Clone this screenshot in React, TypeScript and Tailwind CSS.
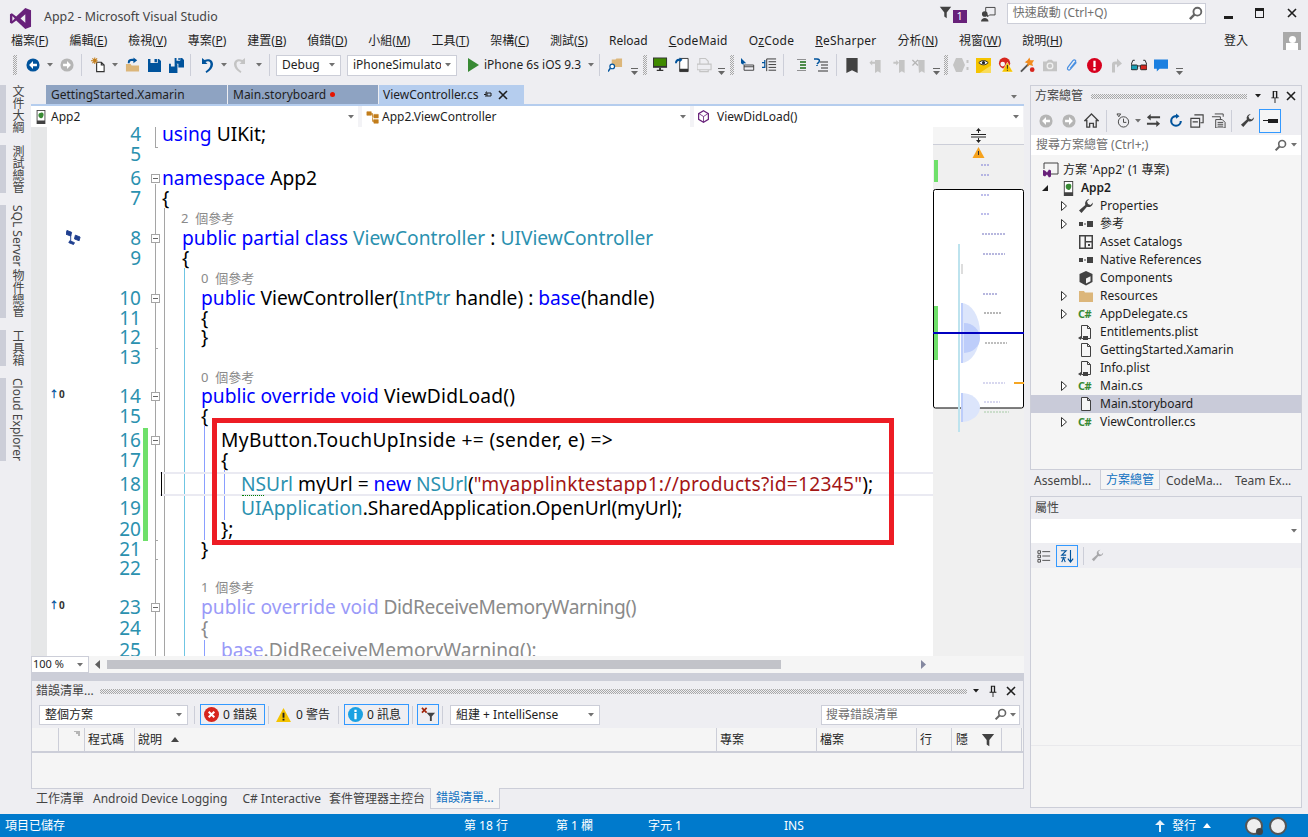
import React from 'react';

type IconProps = { className?: string; children?: React.ReactNode; vb?: string };

function Svg({ className = '', children, vb = '0 0 16 16' }: IconProps) {
  return (
    <svg viewBox={vb} className={`shrink-0 ${className}`}>
      {children}
    </svg>
  );
}

const Caret = ({ className = '' }: { className?: string }) => (
  <Svg vb="0 0 6 4" className={`h-[4px] w-[6px] ${className}`}>
    <path d="M0 0h6L3 3.500z" fill="#717171" />
  </Svg>
);

const checker = 'bg-[conic-gradient(#a8a8a8_25%,transparent_0_50%,#a8a8a8_0_75%,transparent_0)] bg-[length:2px_2px]';

const Grip = ({ className = '' }: { className?: string }) => (
  <div className={`h-[20px] w-[4px] ${checker} ${className}`} />
);

const HGrip = ({ className = '' }: { className?: string }) => (
  <div className={`h-[5px] flex-1 ${checker} ${className}`} />
);

const Sep = ({ className = '' }: { className?: string }) => (
  <div className={`h-[22px] w-px bg-[#ccced8] ${className}`} />
);

const SepSm = ({ className = '' }: { className?: string }) => (
  <div className={`h-[18px] w-px bg-[#ccced8] ${className}`} />
);

const Overflow = ({ className = '' }: { className?: string }) => (
  <Svg vb="0 0 7 7" className={`mt-[12px] h-[7px] w-[7px] ${className}`}>
    <path d="M0 0h7v1H0zM0 3h7L3.500 7z" fill="#666" />
  </Svg>
);

const Circle = ({ dir, color, className = '' }: { dir: 'l' | 'r'; color: string; className?: string }) => (
  <Svg className={`h-[14px] w-[14px] ${className}`}>
    <circle cx="8" cy="8" r="7.500" fill={color} />
    <path d={dir === 'l' ? 'M8 3.500L3.500 8 8 12.500V9.500h4.500v-3H8z' : 'M8 3.500L12.500 8 8 12.500V9.500H3.500v-3H8z'} fill="#fff" />
  </Svg>
);

const Floppy = ({ className = '' }: { className?: string }) => (
  <Svg className={`h-[13px] w-[13px] ${className}`}>
    <path fillRule="evenodd" d="M0 0h3v5h9V0h1.500L16 2.500V16H0zM8 0h3v4H8z" fill="#00539c" />
  </Svg>
);

const Csharp = () => (
  <span className="w-[16px] shrink-0 text-[11px] font-bold leading-[18px] tracking-[-0.5px] text-[#388a34]">C#</span>
);

const PageIcon = ({ lock }: { lock?: boolean }) => (
  <Svg className="h-[16px] w-[16px]">
    <path d="M3.500 1.500h6l3 3v10h-9z M9.500 1.500v3h3" fill={lock ? 'none' : '#f6f6f6'} stroke="#424242" />
    {lock && <path d="M0 14l3-2v4zM5 12h5v4H5z" fill="#424242" />}
  </Svg>
);

const RefIcon = () => (
  <Svg className="h-[16px] w-[16px]">
    <path d="M1 6h4v4H1zM6 7.500h2v1H6zM9 5h6v6H9z" fill="#424242" />
  </Svg>
);

const Arrow = () => (
  <Svg vb="0 0 8 12" className="h-[12px] w-[8px]">
    <path d="M1.500 1.500l5 4.500-5 4.500z" fill="#fff" stroke="#333" />
  </Svg>
);

const PhoneProject = ({ className = '' }: { className?: string }) => (
  <Svg className={className}>
    <path d="M3 0h10v16H3z" fill="#424242" />
    <path d="M4 1h8v11H4z" fill="#fff" />
    <path d="M8 3c2.500-.5 3 1 3 2.500S9.500 10 8 9.500 5 8 5 6s1-3 3-3z" fill="#388a34" />
  </Svg>
);

const Pin = ({ className = '' }: { className?: string }) => (
  <Svg vb="0 0 10 14" className={`w-[10px] ${className}`}>
    <path d="M2.500 1h5v7h1.500v1h-3.500v5h-1V9H1V8h1.500zM4 2v6h2V2z" fill="#1e1e1e" fillRule="evenodd" />
  </Svg>
);

const CloseX = ({ className = '' }: { className?: string }) => (
  <Svg vb="0 0 10 10" className={`h-[10px] w-[10px] ${className}`}>
    <path d="M1 1l8 8M9 1L1 9" stroke="#1e1e1e" strokeWidth="1.600" />
  </Svg>
);

const Magnifier = ({ className = '' }: { className?: string }) => (
  <Svg className={className}>
    <circle cx="10" cy="6" r="4.200" fill="none" stroke="#666" strokeWidth="2" />
    <path d="M7 9l-5 5" stroke="#666" strokeWidth="2.600" />
  </Svg>
);

const Wrench = ({ className = '' }: { className?: string }) => (
  <Svg className={className}>
    <path d="M15 4.500a4.500 4.500 0 0 1-6 4.200L3.500 15 1 12.500l6.300-5.500A4.500 4.500 0 0 1 11.500 1L9 3.500 10 6l2.500 1z" fill="#424242" />
  </Svg>
);

const FunnelIcon = ({ className = '' }: { className?: string }) => (
  <Svg className={className}>
    <path d="M1 1h14L9.500 8v7l-3-2V8z" fill="#424242" />
  </Svg>
);

const menus: [string, string, string, string?][] = [
  ['檔案(', 'F', ')'], ['編輯(', 'E', ')'], ['檢視(', 'V', ')'], ['專案(', 'P', ')'], ['建置(', 'B', ')'],
  ['偵錯(', 'D', ')'], ['小組(', 'M', ')'], ['工具(', 'T', ')'], ['架構(', 'C', ')'], ['測試(', 'S', ')'],
  ['', '', 'Reload'], ['', 'C', 'odeMaid', 'tracking-[0.25px]'], ['O', 'z', 'Code', 'tracking-[0.25px]'], ['', 'R', 'eSharper', 'tracking-[0.25px]'],
  ['分析(', 'N', ')'], ['視窗(', 'W', ')'], ['說明(', 'H', ')'],
];

const KW = 'text-[#0000ff]';
const TY = 'text-[#2b91af]';
const ST = 'text-[#a31515] tracking-[0.25px]';
const FK = 'text-[#9a9af8]';
const FG = 'text-[#8a8a8a]';

type Row = {
  n?: number;
  h: string;
  pad: string;
  lens?: string;
  fold?: boolean;
  code?: [string, string?][];
  glyph?: 'tree' | 'up';
};

const rows: Row[] = [
  { n: 4, h: 'h-[20px]', pad: 'pl-0', code: [['using', KW], [' UIKit;']] },
  { n: 5, h: 'h-[24px]', pad: 'pl-0' },
  { n: 6, h: 'h-[20px]', pad: 'pl-0', fold: true, code: [['namespace', KW], [' App2']] },
  { n: 7, h: 'h-[20px]', pad: 'pl-0', code: [['{']] },
  { h: 'h-[20px]', pad: 'pl-[19px]', lens: '2  個參考' },
  { n: 8, h: 'h-[20px]', pad: 'pl-[20px]', fold: true, glyph: 'tree', code: [['public partial class', KW], [' '], ['ViewController', TY], [' : '], ['UIViewController', TY]] },
  { n: 9, h: 'h-[20px]', pad: 'pl-[20px]', code: [['{']] },
  { h: 'h-[20px]', pad: 'pl-[39px]', lens: '0  個參考' },
  { n: 10, h: 'h-[20px]', pad: 'pl-[39px]', fold: true, code: [['public', KW], [' ViewController('], ['IntPtr', TY], [' handle) : '], ['base', KW], ['(handle)']] },
  { n: 11, h: 'h-[19px]', pad: 'pl-[39px]', code: [['{']] },
  { n: 12, h: 'h-[20px]', pad: 'pl-[39px]', code: [['}']] },
  { n: 13, h: 'h-[20px]', pad: 'pl-0' },
  { h: 'h-[19px]', pad: 'pl-[39px]', lens: '0  個參考' },
  { n: 14, h: 'h-[20px]', pad: 'pl-[39px]', fold: true, glyph: 'up', code: [['public override void', KW], [' ViewDidLoad()', 'tracking-[0.2px]']] },
  { n: 15, h: 'h-[24px]', pad: 'pl-[39px]', code: [['{']] },
  { n: 16, h: 'h-[20px]', pad: 'pl-[59px]', fold: true, code: [['MyButton.TouchUpInside += (sender, e) =>', 'tracking-[0.35px]']] },
  { n: 17, h: 'h-[24px]', pad: 'pl-[59px]', code: [['{']] },
  { n: 18, h: 'h-[24px]', pad: 'pl-[79px]', code: [['NSUrl', TY], [' myUrl = '], ['new', KW], [' '], ['NSUrl', TY], ['('], ['"myapplinktestapp1://products?id=12345"', ST], [');']] },
  { n: 19, h: 'h-[21px]', pad: 'pl-[79px]', code: [['UIApplication', TY], ['.SharedApplication.OpenUrl(myUrl);', 'tracking-[-0.05px]']] },
  { n: 20, h: 'h-[20px]', pad: 'pl-[59px]', code: [['};']] },
  { n: 21, h: 'h-[19px]', pad: 'pl-[39px]', code: [['}']] },
  { n: 22, h: 'h-[19px]', pad: 'pl-0' },
  { h: 'h-[20px]', pad: 'pl-[39px]', lens: '1  個參考' },
  { n: 23, h: 'h-[21px]', pad: 'pl-[39px]', fold: true, glyph: 'up', code: [['public override void', FK], [' DidReceiveMemoryWarning()', `${FG} tracking-[-0.4px]`]] },
  { n: 24, h: 'h-[22px]', pad: 'pl-[39px]', code: [['{', FG]] },
  { n: 25, h: 'h-[20px]', pad: 'pl-[59px]', code: [['base', FK], ['.DidReceiveMemoryWarning();', FG]] },
];

const treeRows: { label: string; icon: React.ReactNode; arrow?: boolean; sel?: boolean }[] = [
  { label: 'Properties', arrow: true, icon: <Wrench className="h-[16px] w-[16px]" /> },
  { label: '參考', arrow: true, icon: <RefIcon /> },
  {
    label: 'Asset Catalogs',
    icon: (
      <Svg className="h-[16px] w-[16px]">
        <path fillRule="evenodd" d="M1 1h14v14H1zM2.500 2.500v11h4v-11zM8 2.500V7h5.500V2.500zM8 8.500v5h5.500v-5zM10 10h2v2h-2z" fill="#424242" />
      </Svg>
    ),
  },
  { label: 'Native References', icon: <RefIcon /> },
  {
    label: 'Components',
    icon: (
      <Svg className="h-[16px] w-[16px]">
        <path d="M8 1l6.500 3v8L8 15.500 1.500 12V4z" fill="#424242" />
        <path d="M8 8.500l4.500-2.300v5L8 13.500z" fill="#f5f5f5" />
      </Svg>
    ),
  },
  {
    label: 'Resources',
    arrow: true,
    icon: (
      <Svg className="h-[16px] w-[16px]">
        <path d="M1 3h5l1 1.500h8V14H1z" fill="#dcb67a" />
      </Svg>
    ),
  },
  { label: 'AppDelegate.cs', arrow: true, icon: <Csharp /> },
  { label: 'Entitlements.plist', icon: <PageIcon lock /> },
  { label: 'GettingStarted.Xamarin', icon: <PageIcon /> },
  { label: 'Info.plist', icon: <PageIcon lock /> },
  { label: 'Main.cs', arrow: true, icon: <Csharp /> },
  { label: 'Main.storyboard', sel: true, icon: <PageIcon /> },
  { label: 'ViewController.cs', arrow: true, icon: <Csharp /> },
];

const miniText: [number, number, number, string][] = [
  [38, 48, 56, '#5555cc'], [48, 48, 56, '#5555cc'], [68, 48, 56, '#5555cc'], [87, 48, 56, '#5555cc'], [107, 49, 72, '#4444aa'],
  [127, 50, 72, '#4444aa'], [167, 50, 65, '#4444aa'], [186, 51, 69, '#444'], [206, 52, 80, '#662255'], [216, 52, 74, '#555'],
  [256, 50, 72, '#9a9ad8'], [275, 51, 67, '#9a9ad8'], [285, 51, 76, '#8fbf8f'],
];

function Minimap() {
  return (
    <Svg vb="0 0 91 530" className="h-[530px] w-[91px]">
      <rect width="91" height="530" fill="#f0f0f0" />
      <rect width="91" height="17" fill="#f5f5f5" />
      <rect y="17" width="91" height="1" fill="#ccced8" />
      <path d="M38 7h15v1H38zM38 9.500h15v1H38zM45.500 1l2.500 3h-2v2h-1V4h-2zM45.500 16L43 13h2v-2h1v2h2z" fill="#222" />
      <path d="M45.500 20l6 11h-12z" fill="#f6a21c" />
      <rect x="45" y="24" width="1" height="4" fill="#333" />
      <rect x="1" y="33" width="4" height="22" fill="#6fe06a" />
      <rect x="0.500" y="62.500" width="90" height="218.500" rx="2" fill="#fff" stroke="#000" />
      <rect x="1" y="179" width="4" height="54" fill="#6fe06a" />
      <rect x="25" y="117" width="2" height="188" fill="#bde3ee" />
      <rect x="28" y="137" width="2" height="10" fill="#ddd" />
      <path d="M28 176a19 30 0 0 1 0 60z" fill="#dce5fb" />
      <path d="M31 196a16 15 0 0 1 0 30z" fill="#bdcdfa" />
      <path d="M28 266a19 14.500 0 0 1 0 29z" fill="#dce5fb" />
      <rect x="28" y="176" width="2" height="60" fill="#bdcdfa" />
      <rect x="28" y="266" width="2" height="29" fill="#bdcdfa" />
      {miniText.map(([y, x1, x2, c]) => (
        <line key={y} x1={x1} x2={x2} y1={y} y2={y} stroke={c} strokeWidth="1.500" strokeDasharray="2 1" opacity="0.5" />
      ))}
      <rect y="205" width="91" height="2" fill="#0000c0" />
      <rect x="81" y="255" width="10" height="2" fill="#f5a623" />
    </Svg>
  );
}

function TitleBar() {
  return (
    <div className="flex h-[30px] shrink-0 items-center">
      <Svg vb="0 0 24 24" className="ml-[9px] mt-[6px] h-[23px] w-[23px]">
        <path fillRule="evenodd" d="M17 1l6 2.500v17L17 23l-9.500-9L3 17.500l-2-1v-9l2-1L7.500 10zM17 7.500L12 12l5 4.500zM3.500 9.500v5L6 12z" fill="#68217a" />
      </Svg>
      <span className="ml-[12px] mt-[5px] text-[12.4px] text-[#444]">App2 - Microsoft Visual Studio</span>
      <FunnelIcon className="ml-[721px] mt-[-6px] h-[15px] w-[13px]" />
      <span className="ml-px mt-[3px] flex h-[13px] w-[14px] items-center justify-center bg-[#68217a] text-[11px] text-white">1</span>
      <Svg className="ml-[14px] mt-[-3px] h-[16px] w-[15px]">
        <path d="M5 1h10v8H9l-2 2V9H5z" fill="none" stroke="#424242" />
        <circle cx="4" cy="8" r="3" fill="#424242" />
        <path d="M0 16c0-5 8-5 8 0z" fill="#424242" />
      </Svg>
      <div className="ml-[11px] mt-[-4px] flex h-[21px] w-[199px] items-center border border-[#ccced8] bg-white pl-[5px] pr-[2px] text-[12px] text-[#717171]">
        <span className="flex-1">快速啟動 (Ctrl+Q)</span>
        <Magnifier className="h-[15px] w-[15px]" />
      </div>
      <div className="ml-[18px] mt-[4px] h-[3px] w-[9px] bg-[#1e1e1e]" />
      <div className="ml-[22px] mt-[-4px] h-[10px] w-[9px] border border-t-[3px] border-[#1e1e1e]" />
      <CloseX className="ml-[23px] mt-[-4px]" />
    </div>
  );
}

function MenuBar() {
  return (
    <div className="flex h-[22px] shrink-0 items-center pl-[11px] text-[12px] text-[#1e1e1e]">
      <div className="flex gap-[21px]">
        {menus.map(([a, u, b, c]) => (
          <span key={a + u + b} className={c}>
            {a}
            {u && <u>{u}</u>}
            {b}
          </span>
        ))}
      </div>
      <span className="ml-auto">登入</span>
      <div className="ml-[35px] mr-[7px] flex h-[18px] w-[18px] flex-col items-center justify-end bg-[#a9a9a9]">
        <div className="h-[7px] w-[7px] rounded-full bg-white" />
        <div className="h-[7px] w-[12px] bg-white" />
      </div>
    </div>
  );
}

function Select({ label, className = '' }: { label: string; className?: string }) {
  return (
    <div className={`flex shrink-0 items-center overflow-hidden border border-[#ccced8] bg-white pl-[5px] pr-[5px] text-[12px] text-[#1e1e1e] ${className}`}>
      <span className="flex-1 overflow-hidden whitespace-nowrap">{label}</span>
      <Caret className="ml-[4px]" />
    </div>
  );
}

function Toolbar() {
  return (
    <div className="flex h-[26px] shrink-0 items-center pl-[13px] text-[12px] text-[#1e1e1e]">
      <Grip />
      <Circle dir="l" color="#00539c" className="ml-[9px]" />
      <Caret className="ml-[7px]" />
      <Circle dir="r" color="#b5b5b5" className="ml-[7px]" />
      <Sep className="ml-[7px]" />
      <Svg className="ml-[9px] h-[16px] w-[15px]">
        <path d="M6 5h5l3 3v7H6z M11 5v3h3" fill="#fff" stroke="#333" strokeWidth="1.200" />
        <path d="M4 0v7M0 3.500h7M1.500 1l5 5M6.500 1l-5 5" stroke="#c27d1a" strokeWidth="1.100" />
      </Svg>
      <Caret className="ml-[6px]" />
      <Svg className="ml-[7px] h-[16px] w-[15px]">
        <path d="M1 7h5l1 1.500h8V15H1z" fill="#dcb67a" />
        <path d="M3 5c0-3 3-4 6-3.500V0l4 3-4 3V4C6.500 3.500 5 4 5 6H3z" fill="#00539c" />
      </Svg>
      <Floppy className="ml-[8px]" />
      <Svg className="ml-[8px] h-[15px] w-[15px]">
        <path fillRule="evenodd" d="M6 0h2v3h4V0h2l2 2v8h-6V6H6zM10 0h1.500v2H10zM0 6h2v3h4V6h2l1 1v9H0z" fill="#00539c" />
      </Svg>
      <Sep className="ml-[6px]" />
      <Svg className="ml-[9px] h-[16px] w-[13px]" vb="0 0 13 16">
        <path d="M2 1v6h5.500L5.500 5c3-1.500 5-.5 5 2.500 0 3-2.500 5-5 7l1 1.500c4-2.500 6.500-5.500 6.500-8.500C13 2.500 8.500 1 4.500 3L2 1z" fill="#00539c" />
      </Svg>
      <Caret className="ml-[8px]" />
      <Svg className="ml-[7px] h-[16px] w-[13px]" vb="0 0 13 16">
        <path d="M11 1v6H5.500L7.500 5c-3-1.500-5-.5-5 2.500 0 3 2.500 5 5 7l-1 1.500C2.500 13.500 0 10.500 0 7.500 0 2.500 4.500 1 8.500 3L11 1z" fill="#c4c4c4" />
      </Svg>
      <Caret className="ml-[9px]" />
      <Sep className="ml-[7px]" />
      <Select label="Debug" className="ml-[6px] h-[21px] w-[65px]" />
      <Select label="iPhoneSimulato" className="ml-[6px] h-[21px] w-[110px]" />
      <Svg vb="0 0 12 14" className="ml-[10px] h-[14px] w-[12px]">
        <path d="M1 0l11 7-11 7z" fill="#388a34" />
      </Svg>
      <span className="ml-[5px] w-[97px] whitespace-nowrap">iPhone 6s iOS 9.3</span>
      <Caret className="ml-[7px]" />
      <Sep className="ml-[5px]" />
      <Svg className="ml-[8px] h-[16px] w-[15px]">
        <path d="M4 2h4l1-1h6v9H8l-4 0z" fill="#dcb67a" />
        <circle cx="4.500" cy="9.500" r="2.500" fill="#fff" stroke="#00539c" strokeWidth="1.300" />
        <path d="M2.500 11.500L0 15" stroke="#00539c" strokeWidth="1.500" />
      </Svg>
      <Overflow className="ml-[8px]" />
      <Grip className="ml-[5px]" />
      <Svg className="ml-[6px] h-[16px] w-[15px]">
        <path d="M0 0h15v11H0z" fill="#333" />
        <path d="M1 1h13v8H1z" fill="#3f8a00" />
        <path d="M4 13h7v1.500H4zM6.500 11h2v2h-2z" fill="#333" />
      </Svg>
      <Svg className="ml-[7px] h-[16px] w-[15px]">
        <path d="M5 1h9v14H5z" fill="#fff" stroke="#333" />
        <path d="M5 12h9v3H5z" fill="#333" />
        <path d="M0 6c0-3 2-5 5-4.500V0l3 2.500L5 5V3.500C3 3.500 2 5 2 6z" fill="#00539c" />
      </Svg>
      <Svg className="ml-[7px] h-[16px] w-[15px]">
        <path d="M3 1h6l3 3v3H3zM0 7h15v6H0zM3 13h9v2H3z" fill="none" stroke="#c4c4c4" strokeWidth="1.200" />
      </Svg>
      <Overflow className="ml-[6px]" />
      <Grip className="ml-[5px]" />
      <Svg className="ml-[7px] h-[16px] w-[14px]">
        <path d="M0 0l6 6H3v2L0 6z" fill="#00539c" />
        <path d="M3.500 8h11v6h-11z M3.500 10h11" fill="none" stroke="#333" />
      </Svg>
      <Svg className="ml-[7px] h-[15px] w-[15px]">
        <path d="M5 1h10M7 4h8M7 7h8M7 10h8M7 13h8M5 1v13" stroke="#333" fill="none" />
        <path d="M0 5h3V2M3 5v5H0" stroke="#00539c" fill="none" strokeWidth="1.300" />
      </Svg>
      <Sep className="ml-[6px]" />
      <Svg className="ml-[11px] h-[12px] w-[11px]" vb="0 0 11 12">
        <path d="M2 0h9M5 3h6M5 6h6M5 9h6M2 12h9" stroke="#333" />
        <path d="M5 3h6M5 6h6M5 9h6" stroke="#388a34" strokeWidth="1.300" />
      </Svg>
      <Svg className="ml-[8px] h-[14px] w-[14px]" vb="0 0 14 14">
        <path d="M0 1h3c2 0 3 1 2 3L3 6M3 7v1" stroke="#00539c" strokeWidth="1.500" fill="none" />
        <path d="M6 4h8M7 7h7M7 10h7M4 13h10" stroke="#333" />
      </Svg>
      <Sep className="ml-[8px]" />
      <Svg vb="0 0 12 16" className="ml-[9px] h-[15px] w-[12px]">
        <path d="M0 0h12v16l-6-3-6 3z" fill="#424242" />
      </Svg>
      <Svg vb="0 0 12 16" className="ml-[11px] h-[15px] w-[12px]">
        <path d="M6 2h6v14l-3-2-3 2zM0 5l3-3v2h3v2H3v2z" fill="#c4c4c4" />
      </Svg>
      <Svg vb="0 0 12 16" className="ml-[12px] h-[15px] w-[12px]">
        <path d="M6 2h6v14l-3-2-3 2zM6 5L3 2v2H0v2h3v2z" fill="#c4c4c4" />
      </Svg>
      <Svg vb="0 0 13 16" className="ml-[7px] h-[15px] w-[13px]">
        <path d="M6 2h7v14l-3-2-3 2z" fill="#c4c4c4" />
        <path d="M0 2l6 6M6 2L0 8" stroke="#b5b5b5" strokeWidth="1.500" />
      </Svg>
      <Overflow className="ml-[8px]" />
      <Grip className="ml-[4px]" />
      <Svg vb="0 0 16 14" className="ml-[5px] h-[14px] w-[16px]">
        <path d="M3 0h6l3 7-3 7H3L0 7zM13.500 2h2v3h-2zM13.500 9h2v3h-2z" fill="#c4c4c4" />
      </Svg>
      <Svg className="ml-[7px] h-[15px] w-[15px]">
        <rect width="16" height="16" fill="#f5c400" />
        <path d="M4 16L16 8v8z" fill="#f9dc5c" />
        <path d="M3 5c3-3 7-3 10 0-3 3-7 3-10 0z" fill="#fff" stroke="#222" />
        <circle cx="8" cy="5" r="1.700" fill="#222" />
      </Svg>
      <Svg className="ml-[7px] h-[16px] w-[15px]">
        <circle cx="7" cy="6" r="6" fill="#d7261e" />
        <circle cx="5" cy="7" r="2.500" fill="#f6f6f6" />
        <path d="M10 5l6 10.500H4z" fill="#f5c400" stroke="#fff" strokeWidth="0.500" />
        <path d="M9.500 8h1v4h-1zM9.500 13h1v1h-1z" fill="#222" />
      </Svg>
      <Svg className="ml-[7px] h-[16px] w-[15px]">
        <path d="M1 15L9 7" stroke="#555" strokeWidth="2" />
        <path d="M10 0l1 3 4 0-2 3 1 3-4-1-2 2 0-4-3-1 3-2z" fill="#f28c1e" />
        <circle cx="13" cy="13" r="2.500" fill="#d7261e" />
      </Svg>
      <Svg className="ml-[8px] h-[14px] w-[14px]">
        <path d="M0 4h4l2-2h4l2 2h4v11H0z" fill="#c4c4c4" />
        <circle cx="8" cy="9" r="3.200" fill="#c4c4c4" stroke="#f0f0f0" strokeWidth="1.500" />
      </Svg>
      <Svg className="ml-[8px] h-[16px] w-[14px]">
        <path d="M13 5L6 13c-1.500 1.500-4 .5-3-2l6-8c1.500-1.500 4-.5 3 1.500L6 12" fill="none" stroke="#4a90e2" strokeWidth="1.400" />
      </Svg>
      <Svg className="ml-[8px] h-[15px] w-[15px]">
        <circle cx="8" cy="8" r="8" fill="#d7001e" />
        <path d="M6.800 3h2.400v6.500H6.800zM6.800 11h2.400v2.300H6.800z" fill="#fff" />
      </Svg>
      <Svg vb="0 0 10 14" className="ml-[10px] h-[15px] w-[10px]">
        <path d="M0 14V6c0-2 1-3 3-3h2V0l5 5-5 4V6H3v8z" fill="#c4c4c4" />
      </Svg>
      <Svg vb="0 0 17 12" className="ml-[9px] h-[12px] w-[16px]">
        <path d="M0 6l2-5h2M17 6l-2-5h-2" stroke="#222" fill="none" />
        <rect x="0" y="6" width="7" height="5" rx="1" fill="#1a9fb5" stroke="#222" />
        <rect x="10" y="6" width="7" height="5" rx="1" fill="#d7261e" stroke="#222" />
        <path d="M7 7h3" stroke="#222" />
      </Svg>
      <Svg vb="0 0 15 13" className="ml-[7px] h-[13px] w-[14px]">
        <path d="M0 0h15v10H6l-3 3v-3H0z" fill="#1b7fe0" />
      </Svg>
      <Overflow className="ml-[8px]" />
    </div>
  );
}

function LeftRail() {
  const tabs = ['文件大綱', '測試總管', 'SQL Server 物件總管', '工具箱', 'Cloud Explorer'];
  return (
    <div className="flex w-[31px] shrink-0 flex-col gap-[12px]">
      {tabs.map((t) => (
        <div key={t} className="flex">
          <div className="w-[6px] bg-[#ccced8]" />
          <span className="ml-[4px] text-[12px] leading-[14px] text-[#444] [writing-mode:vertical-rl]">{t}</span>
        </div>
      ))}
    </div>
  );
}

function DocTabs() {
  return (
    <div className="flex h-[19px] shrink-0 gap-px pl-[15px] text-[12px] leading-[19px] text-[#1e1e1e]">
      <div className="w-[181px] bg-[#8ea3c2] pl-[5px]">GettingStarted.Xamarin</div>
      <div className="flex w-[150px] items-center bg-[#8ea3c2] pl-[5px]">
        Main.storyboard
        <span className="ml-[4px] h-[5px] w-[5px] rounded-full bg-[#e51400]" />
      </div>
      <div className="flex w-[145px] items-center bg-[#b5cdee] pl-[4px]">
        ViewController.cs
        <Svg vb="0 0 8 8" className="ml-[5px] h-[8px] w-[8px]">
          <path d="M2 1v5M2 1h1M2 6h0M0 3.500h2M3 2h4v3H3z" stroke="#1e1e1e" fill="none" />
        </Svg>
        <CloseX className="ml-[6px] h-[9px] w-[9px]" />
      </div>
      <Caret className="ml-[486px] mt-[10px]" />
    </div>
  );
}

function NavBar() {
  return (
    <div className="flex h-[23px] shrink-0 gap-[4px] border-t-2 border-[#b5cdee] bg-[#f3f3f6] text-[12px] text-[#1e1e1e]">
      <div className="flex w-[327px] items-center bg-white pl-[3px] pr-[4px]">
        <PhoneProject className="h-[14px] w-[14px]" />
        <span className="ml-[3px] flex-1">App2</span>
        <Caret />
      </div>
      <div className="flex w-[328px] items-center bg-white pl-[4px] pr-[4px]">
        <Svg className="h-[14px] w-[14px]">
          <path d="M1 2h5v4H1zM9 5h5v4H9zM9 11h5v4H9zM6 4h1.500v9H9M7.500 7H9" fill="#c27d1a" stroke="#c27d1a" strokeWidth="0.700" />
        </Svg>
        <span className="ml-[2px] flex-1">App2.ViewController</span>
        <Caret />
      </div>
      <div className="flex w-[329px] items-center bg-white pl-[3px] pr-[4px]">
        <Svg className="h-[13px] w-[13px]">
          <path d="M8 1l6 3.500v7L8 15l-6-3.500v-7z" fill="none" stroke="#68217a" strokeWidth="1.500" />
          <path d="M2.500 4.500L8 8l5.500-3.500M8 8v7" fill="none" stroke="#68217a" />
        </Svg>
        <span className="ml-[7px] flex-1">ViewDidLoad()</span>
        <Caret />
      </div>
    </div>
  );
}

function FoldBox() {
  return (
    <div className="relative z-10 mt-[6px] flex h-[9px] w-[9px] items-center justify-center border border-[#a5a5a5] bg-white">
      <div className="h-px w-[5px] bg-[#666]" />
    </div>
  );
}

function Editor() {
  return (
    <div className="relative w-[886px] shrink-0 overflow-hidden bg-white">
      <div className="mt-[-3px]">
        {rows.map((r, i) => (
          <div key={i} className={`flex ${r.h}`}>
            <div className="w-[53px] shrink-0">
              {r.glyph === 'tree' && (
                <Svg className="ml-[19px] mt-[1px] h-[16px] w-[15px]">
                  <path d="M1 1l5 2-1 4-5-2zM10 6l5 2-1 4-5-2zM4 12l5 2-1 2-5-2zM5 6v7" fill="#1f3f8f" stroke="#1f3f8f" />
                </Svg>
              )}
              {r.glyph === 'up' && (
                <div className="ml-[2px] flex items-center text-[10px] font-bold leading-[16px] text-[#333]">
                  <span className="text-[#00539c]">↑</span>
                  <span>0</span>
                </div>
              )}
            </div>
            <div className="w-[41px] shrink-0 text-right text-[19px] leading-[20px] text-[#2b91af]">{r.n}</div>
            <div className="ml-[10px] w-[9px] shrink-0">{r.fold && <FoldBox />}</div>
            <div className={`ml-[2px] whitespace-pre text-[19.2px] leading-[20px] text-black ${r.pad}`}>
              {r.lens && <span className="block text-[13px] leading-[20px] text-[#8a8a8a]">{r.lens}</span>}
              {r.code?.map(([t, c], j) => (
                <span key={j} className={c}>
                  {t}
                </span>
              ))}
            </div>
          </div>
        ))}
      </div>

      {/* fold lines and guides sit over the rows */}
      <div className="absolute left-[108px] top-0 h-[20px] w-px bg-[#a5a5a5]" />
      <div className="absolute left-[108px] top-[20px] h-px w-[3px] bg-[#a5a5a5]" />
      <div className="absolute left-[108px] top-[57px] h-[473px] w-px bg-[#a5a5a5]" />
      <div className="absolute left-[108px] top-[221px] h-px w-[3px] bg-[#a5a5a5]" />
      <div className="absolute left-[108px] top-[413px] h-px w-[3px] bg-[#a5a5a5]" />
      <div className="absolute left-[108px] top-[432px] h-px w-[3px] bg-[#a5a5a5]" />
      <div className="absolute left-[117px] top-[81px] h-[449px] w-px bg-[#a5a5a5]" />
      <div className="absolute left-[137px] top-[141px] h-[389px] w-px bg-[#6fc5e3]" />
      <div className="absolute left-[157px] top-[298px] h-[115px] w-px bg-[#8a9fff]" />
      <div className="absolute left-[157px] top-[513px] h-[17px] w-px bg-[#8a9fff]" />
      <div className="absolute left-[177px] top-[343px] h-[50px] w-px bg-[#8a9fff]" />
      <div className="absolute left-[96px] top-[301px] h-[113px] w-[5px] bg-[#6fe06a]" />
      <div className="absolute left-[113px] top-[345px] h-[24px] w-[773px] border-y-2 border-[#eaeaf2]" />
      <div className="absolute left-[114px] top-[345px] h-[24px] w-px bg-black" />
      <div className="absolute left-[195px] top-[368px] w-[22px] border-b border-dotted border-[#008000]" />
      <div className="absolute left-[165px] top-[291px] h-[127px] w-[682px] border-[5px] border-[#ed1c24]" />
    </div>
  );
}

function HScroll() {
  return (
    <div className="flex h-[17px] shrink-0 items-center bg-[#f5f5f5]">
      <div className="flex h-[17px] w-[58px] items-center justify-between border border-[#ccced8] bg-white pl-[1px] pr-[5px] text-[11px] text-[#1e1e1e]">
        100 %
        <Caret />
      </div>
      <Svg vb="0 0 5 9" className="ml-[6px] h-[9px] w-[5px]">
        <path d="M5 0v9L0 4.500z" fill="#606060" />
      </Svg>
      <div className="ml-[7px] h-[9px] w-[674px] bg-[#c2c3c9]" />
      <Svg vb="0 0 5 9" className="ml-[140px] h-[9px] w-[5px]">
        <path d="M0 0v9l5-4.500z" fill="#8488a0" />
      </Svg>
    </div>
  );
}

function ToggleBtn({ children, className = '', on = true }: { children: React.ReactNode; className?: string; on?: boolean }) {
  return (
    <div className={`flex h-[21px] items-center whitespace-nowrap border text-[12px] ${on ? 'border-[#3399ff]' : 'border-transparent'} ${className}`}>{children}</div>
  );
}

function ErrorPane() {
  return (
    <div className="flex h-[109px] shrink-0 flex-col border border-[#ccced8] bg-[#f5f5f5] text-[12px] text-[#1e1e1e]">
      <div className="flex h-[20px] shrink-0 items-center bg-[#eeeef2] pl-[4px] pr-[7px] text-[#444]">
        <span>錯誤清單...</span>
        <HGrip className="ml-[6px]" />
        <Caret className="ml-[6px] [&>path]:fill-[#1e1e1e]" />
        <Pin className="ml-[9px] h-[12px]" />
        <CloseX className="ml-[8px]" />
      </div>
      <div className="flex h-[27px] shrink-0 items-center bg-[#eeeef2] pl-[7px]">
        <Select label="整個方案" className="h-[20px] w-[149px]" />
        <SepSm className="ml-[6px]" />
        <ToggleBtn className="ml-[5px] w-[65px] pl-[3px]">
          <Svg className="h-[15px] w-[15px]">
            <circle cx="8" cy="8" r="8" fill="#d7261e" />
            <path d="M5 5l6 6M11 5l-6 6" stroke="#fff" strokeWidth="2.200" />
          </Svg>
          <span className="ml-[4px]">0 錯誤</span>
        </ToggleBtn>
        <SepSm className="ml-[3px]" />
        <ToggleBtn on={false} className="ml-[6px] w-[55px]">
          <Svg vb="0 0 16 15" className="h-[14px] w-[15px]">
            <path d="M8 0l8 15H0z" fill="#f5c400" />
            <path d="M7 5h2v5.500H7zM7 11.500h2V13.500H7z" fill="#222" />
          </Svg>
          <span className="ml-[5px]">0 警告</span>
        </ToggleBtn>
        <SepSm className="ml-[8px]" />
        <ToggleBtn className="ml-[5px] w-[65px] pl-[3px]">
          <Svg className="h-[15px] w-[15px]">
            <circle cx="8" cy="8" r="8" fill="#1ba1e2" />
            <path d="M6.800 3h2.400v2.300H6.800zM6.800 6.500h2.400V13H6.800z" fill="#fff" />
          </Svg>
          <span className="ml-[4px]">0 訊息</span>
        </ToggleBtn>
        <SepSm className="ml-[3px]" />
        <ToggleBtn className="ml-[4px] w-[22px] justify-center">
          <Svg className="h-[15px] w-[15px]">
            <path d="M1 1l5 5M6 1L1 6" stroke="#a1260d" strokeWidth="1.800" />
            <path d="M6 6h9l-3.500 4v5h-2v-5z" fill="#424242" />
          </Svg>
        </ToggleBtn>
        <SepSm className="ml-[3px]" />
        <Select label="組建 + IntelliSense" className="ml-[7px] h-[20px] w-[150px]" />
        <div className="ml-[221px] flex h-[20px] w-[199px] items-center border border-[#ccced8] bg-white pl-[4px] pr-[3px] text-[#717171]">
          <span className="flex-1">搜尋錯誤清單</span>
          <Magnifier className="h-[13px] w-[13px]" />
          <Caret className="ml-[3px]" />
        </div>
      </div>
      <div className="flex h-[25px] shrink-0 border-b-2 border-[#ccced8]">
        <div className="w-[27px] border-r border-[#ccced8]" />
        <div className="flex w-[26px] justify-end border-r border-[#ccced8] pr-[4px] pt-[3px]">
          <Svg vb="0 0 6 6" className="h-[6px] w-[6px]">
            <path d="M0 0h6M2 2h4M4 4h2" stroke="#777" />
          </Svg>
        </div>
        <div className="w-[50px] border-r border-[#ccced8] pl-[3px] leading-[24px]">程式碼</div>
        <div className="flex w-[582px] items-center border-r border-[#ccced8] pl-[3px]">
          說明
          <Svg vb="0 0 8 5" className="ml-[9px] h-[5px] w-[8px]">
            <path d="M4 0l4 5H0z" fill="#444" />
          </Svg>
        </div>
        <div className="w-[100px] border-r border-[#ccced8] pl-[3px] leading-[24px]">專案</div>
        <div className="w-[100px] border-r border-[#ccced8] pl-[3px] leading-[24px]">檔案</div>
        <div className="w-[35px] border-r border-[#ccced8] pl-[3px] leading-[24px]">行</div>
        <div className="flex w-[50px] items-center border-r border-[#ccced8] pl-[4px]">
          隱
          <FunnelIcon className="ml-[13px] h-[14px] w-[14px]" />
        </div>
        <div className="w-[20px] border-r border-[#ccced8]" />
      </div>
    </div>
  );
}

function BottomTabs() {
  return (
    <div className="flex h-[20px] shrink-0 items-center text-[12px] text-[#444]">
      <span className="ml-[5px]">工作清單</span>
      <span className="ml-[9px]">Android Device Logging</span>
      <span className="ml-[15px]">C# Interactive</span>
      <span className="ml-[8px]">套件管理器主控台</span>
      <span className="ml-[5px] mt-[-1px] flex h-[21px] items-center border border-t-0 border-[#ccced8] bg-[#f5f5f5] px-[5px] text-[#0e70c0]">錯誤清單...</span>
    </div>
  );
}

function SolutionPanel() {
  return (
    <div className="flex h-[385px] shrink-0 flex-col border border-[#ccced8] bg-[#f5f5f5] text-[12px] text-[#1e1e1e]">
      <div className="flex h-[20px] shrink-0 items-center bg-[#eeeef2] pl-[4px] pr-[5px] text-[#444]">
        方案總管
        <HGrip className="ml-[8px]" />
        <Caret className="ml-[8px] [&>path]:fill-[#1e1e1e]" />
        <Pin className="ml-[9px] h-[13px]" />
        <CloseX className="ml-[6px]" />
      </div>
      <div className="flex h-[29px] shrink-0 items-center bg-[#eeeef2] pl-[8px]">
        <Circle dir="l" color="#b5b5b5" className="h-[13px] w-[13px]" />
        <Circle dir="r" color="#b5b5b5" className="ml-[9px] h-[13px] w-[13px]" />
        <Svg className="ml-[8px] h-[15px] w-[15px]">
          <path d="M8 1l7 7h-2v7h-3v-4H6v4H3V8H1z" fill="none" stroke="#424242" strokeWidth="1.400" />
        </Svg>
        <Sep className="ml-[7px]" />
        <Svg className="ml-[9px] h-[15px] w-[15px]">
          <circle cx="8" cy="9.500" r="5.500" fill="none" stroke="#424242" />
          <path d="M8 6v4h3M1 1h4L3 4z" fill="none" stroke="#424242" />
        </Svg>
        <Caret className="ml-[4px]" />
        <Svg className="ml-[5px] h-[15px] w-[15px]">
          <path d="M5 1L1 4.500 5 8V5.500h10v-2H5zM11 8l4 3.500-4 3.500v-2.500H1v-2h10z" fill="#424242" />
        </Svg>
        <Svg className="ml-[8px] h-[15px] w-[14px]">
          <path d="M8 3a5.500 5.500 0 1 0 5.500 5.500" fill="none" stroke="#00539c" strokeWidth="2.400" />
          <path d="M8 0v6l4-3z" fill="#00539c" />
        </Svg>
        <Svg className="ml-[7px] h-[14px] w-[14px]">
          <path d="M5 1h10v9h-3M1 5h10v10H1zM3 9h6" fill="none" stroke="#424242" strokeWidth="1.300" />
        </Svg>
        <Svg className="ml-[7px] h-[15px] w-[15px]">
          <path d="M4 1h9v3M1 4h9v3M5 7h7l3 3v6H5zM7 10h6M7 12h6M7 14h6" fill="none" stroke="#424242" />
        </Svg>
        <Sep className="ml-[5px]" />
        <Wrench className="ml-[8px] h-[15px] w-[15px]" />
        <div className="ml-[4px] flex h-[24px] w-[22px] items-center border border-[#3399ff] bg-[#f5f5f5]">
          <div className="ml-[3px] h-px w-[5px] bg-[#1e1e1e]" />
          <div className="h-[4px] w-[10px] bg-[#1e1e1e]" />
        </div>
      </div>
      <div className="flex h-[20px] shrink-0 items-center bg-white pl-[5px] pr-[4px] text-[#717171]">
        <span className="flex-1">搜尋方案總管 (Ctrl+;)</span>
        <Magnifier className="h-[13px] w-[13px]" />
        <Caret className="ml-[4px]" />
      </div>
      <div className="pt-[6px]">
        <div className="flex h-[18px] items-center pl-[12px]">
          <Svg className="h-[16px] w-[16px]">
            <path d="M1 1h14v11H8" fill="none" stroke="#424242" />
            <path d="M1 1v6" stroke="#424242" />
            <path d="M0 8l2 .500 2 2 2-3 2 1v6l-2 1-2-3-2 2-2-1z" fill="#68217a" />
          </Svg>
          <span className="ml-[4px]">方案 'App2' (1 專案)</span>
        </div>
        <div className="flex h-[18px] items-center pl-[11px]">
          <Svg vb="0 0 6 6" className="h-[6px] w-[6px]">
            <path d="M6 0v6H0z" fill="#1e1e1e" />
          </Svg>
          <PhoneProject className="ml-[13px] h-[15px] w-[15px]" />
          <span className="ml-[5px] font-semibold">App2</span>
        </div>
        {treeRows.map((t) => (
          <div key={t.label} className={`flex h-[18px] items-center pl-[29px] ${t.sel ? 'bg-[#c9cbd9]' : ''}`}>
            <div className="w-[8px]">{t.arrow && <Arrow />}</div>
            <div className="ml-[10px] w-[16px]">{t.icon}</div>
            <span className="ml-[6px]">{t.label}</span>
          </div>
        ))}
      </div>
    </div>
  );
}

function SideTabs() {
  return (
    <div className="flex h-[21px] shrink-0 items-center text-[12px] text-[#444]">
      <span className="ml-[4px] w-[66px]">Assembl...</span>
      <span className="mt-[-1px] flex h-[20px] w-[60px] items-center justify-center border border-t-0 border-[#ccced8] bg-[#f5f5f5] text-[#0e70c0]">方案總管</span>
      <span className="ml-[6px] w-[69px]">CodeMa...</span>
      <span>Team Ex...</span>
    </div>
  );
}

function PropertiesPanel() {
  return (
    <div className="mt-[5px] flex h-[312px] shrink-0 flex-col border border-[#ccced8] bg-[#f5f5f5] text-[12px] text-[#444]">
      <div className="flex h-[22px] shrink-0 items-center bg-[#eeeef2] pl-[4px]">屬性</div>
      <div className="flex h-[24px] shrink-0 items-center justify-end bg-white pr-[4px]">
        <Caret />
      </div>
      <div className="flex h-[25px] shrink-0 items-center bg-[#eeeef2] pl-[6px]">
        <Svg className="h-[14px] w-[14px]">
          <path d="M1 2h3v3H1zM1 7h3v3H1zM1 12h3v3H1zM6 3h9M6 8h9M6 13h9" stroke="#424242" fill="none" />
        </Svg>
        <div className="ml-[5px] flex h-[22px] w-[22px] items-center justify-center border border-[#3399ff]">
          <Svg className="h-[14px] w-[14px]">
            <path d="M12 1v13M9 11l3 4 3-4M1 2h6L2 7h5M1 10h6M2 15l2-5 2 5" stroke="#00539c" fill="none" strokeWidth="1.300" />
          </Svg>
        </div>
        <SepSm className="ml-[5px]" />
        <Wrench className="ml-[7px] h-[13px] w-[13px] opacity-40" />
      </div>
      <div className="flex-1" />
      <div className="h-[62px] shrink-0 border-t border-[#e9e9ec]" />
    </div>
  );
}

function StatusBar() {
  return (
    <div className="flex h-[23px] shrink-0 items-center bg-[#007acc] text-[12px] text-white">
      <span className="ml-[5px] w-[459px]">項目已儲存</span>
      <span className="w-[92px]">第 18 行</span>
      <span className="w-[92px]">第 1 欄</span>
      <span className="w-[136px]">字元 1</span>
      <span className="w-[371px]">INS</span>
      <Svg vb="0 0 10 12" className="h-[12px] w-[10px]">
        <path d="M5 0l5 5H6v7H4V5H0z" fill="#fff" opacity="0.900" />
      </Svg>
      <span className="ml-[7px]">發行</span>
      <Svg vb="0 0 8 5" className="ml-[7px] h-[5px] w-[8px]">
        <path d="M4 0l4 5H0z" fill="#fff" />
      </Svg>
      <div className="relative ml-[34px] h-[18px] w-[18px] rounded-full border-2 border-[#555] bg-[#eee]">
        <div className="absolute bottom-[-2px] right-[-2px] h-[7px] w-[7px] rounded-full bg-[#444]" />
      </div>
      <div className="ml-[6px] h-[18px] w-[18px] rounded-full border-2 border-[#555] bg-[#eee]" />
    </div>
  );
}

export default function App() {
  return (
    <div className="flex h-[837px] w-[1308px] flex-col overflow-hidden bg-[#eeeef2] font-['Noto_Sans','Noto_Sans_CJK_TC',sans-serif]">
      <TitleBar />
      <MenuBar />
      <Toolbar />
      <div className="flex h-[736px] shrink-0 pt-[7px]">
        <LeftRail />
        <div className="flex w-[993px] shrink-0 flex-col">
          <DocTabs />
          <NavBar />
          <div className="flex h-[529px] shrink-0 overflow-hidden">
            <div className="w-[16px] shrink-0 bg-[#e6e7e8]" />
            <Editor />
            <Minimap />
          </div>
          <HScroll />
          <div className="h-[7px] shrink-0 bg-[#ccced8]" />
          <ErrorPane />
          <BottomTabs />
        </div>
        <div className="ml-[6px] flex w-[272px] shrink-0 flex-col">
          <SolutionPanel />
          <SideTabs />
          <PropertiesPanel />
        </div>
      </div>
      <StatusBar />
    </div>
  );
}
